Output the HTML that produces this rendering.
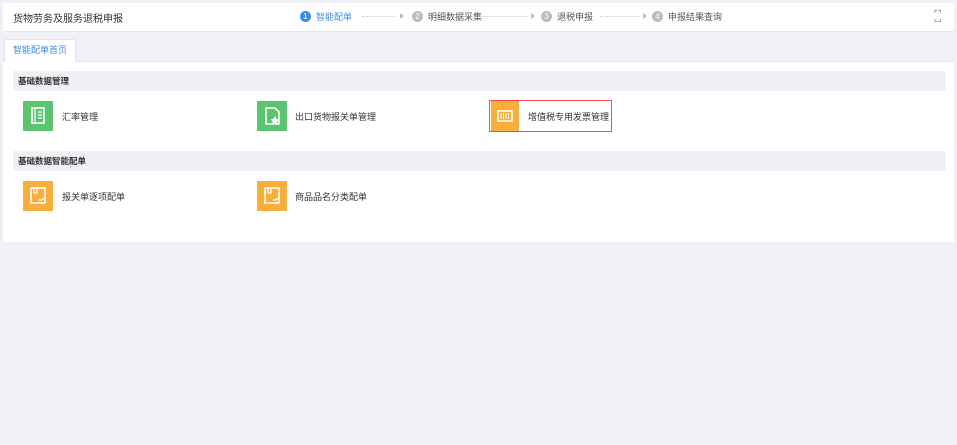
<!DOCTYPE html>
<html><head><meta charset="utf-8"><style>
*{margin:0;padding:0;box-sizing:border-box}
body{width:957px;height:445px;background:#f0f1f6;font-family:"Liberation Sans","Noto Sans CJK SC",sans-serif;font-size:9px;color:#333;position:relative;overflow:hidden}
.abs{position:absolute}
.hdr{left:3px;top:3px;width:951px;height:29px;background:#fff;border-bottom:1px solid #e6e8ee}
.title{left:13px;top:10px;font-size:10px;color:#333}
.step{top:10px;font-size:9px;color:#555;display:flex;align-items:center}
.num{width:11px;height:11px;border-radius:50%;background:#bbb;color:#fff;font-size:8px;text-align:center;line-height:11px;margin-right:5px}
.dots{top:16px;border-top:1px dotted #ccc;height:0}
.arr{top:13px;width:0;height:0;border-left:4px solid #bbb;border-top:3px solid transparent;border-bottom:3px solid transparent}
.tab{left:4px;top:39px;width:72px;height:23px;background:#fff;border:1px solid #e3e5ea;border-bottom:none;color:#3a8ee6;font-size:9px;text-align:center;line-height:21px}
.main{left:3px;top:61px;width:951px;height:181px;background:#fff;border-top:1px solid #e3e5ea}
.sec{left:13px;width:933px;height:20px;background:#eef0f5;font-weight:bold;font-size:8.5px;line-height:20px;padding-left:5px;color:#333}
.ic{width:30px;height:30px}
.lbl{font-size:9px;color:#333}
</style></head><body>
<div class="abs hdr"></div>
<div class="abs title">货物劳务及服务退税申报</div>
<div class="abs step" style="left:300px;color:#3a8ee6"><span class="num" style="background:#3a8ee6">1</span>智能配单</div>
<div class="abs dots" style="left:362px;width:34px"></div><div class="abs arr" style="left:400px"></div>
<div class="abs step" style="left:412px"><span class="num">2</span>明细数据采集</div>
<div class="abs dots" style="left:480px;width:48px"></div><div class="abs arr" style="left:531px"></div>
<div class="abs step" style="left:541px"><span class="num">3</span>退税申报</div>
<div class="abs dots" style="left:600px;width:40px"></div><div class="abs arr" style="left:643px"></div>
<div class="abs step" style="left:652px"><span class="num">4</span>申报结果查询</div>
<div class="abs" style="left:934px;top:11px;font-size:8px;color:#666;line-height:5px">⌜⌝<br>⌞⌟</div>
<div class="abs main"></div>
<div class="abs tab">智能配单首页</div>
<div class="abs sec" style="top:71px">基础数据管理</div>
<div class="abs sec" style="top:151px">基础数据智能配单</div>

<svg class="abs ic" style="left:23px;top:101px" viewBox="0 0 30 30"><rect width="30" height="30" fill="#5cc46e"/><rect x="9" y="7" width="12" height="15" fill="none" stroke="#fff" stroke-width="1.6"/><path d="M12 7v15M15 11h4M15 14h4M15 17h4" stroke="#fff" stroke-width="1.3"/></svg>
<div class="abs lbl" style="left:62px;top:110px">汇率管理</div>

<svg class="abs ic" style="left:257px;top:101px" viewBox="0 0 30 30"><rect width="30" height="30" fill="#5cc46e"/><path d="M9 7h9l4 4v12H9z" fill="none" stroke="#fff" stroke-width="1.6"/><path d="M18 15l1.5 3 3 .3-2.3 2 .7 3-2.9-1.6-2.9 1.6.7-3-2.3-2 3-.3z" fill="#fff"/></svg>
<div class="abs lbl" style="left:295px;top:110px">出口货物报关单管理</div>

<div class="abs" style="left:489px;top:100px;width:123px;height:32px;border:1.5px solid #ef4d4d"></div>
<svg class="abs ic" style="left:491px;top:101px;width:28px" viewBox="0 0 28 30"><rect width="28" height="30" fill="#f9ad3b"/><rect x="7" y="10" width="14" height="10" fill="none" stroke="#fff" stroke-width="1.5"/><path d="M10 12v6M12.5 12v6M15 12v6M17.5 12v6" stroke="#fff" stroke-width="1"/></svg>
<div class="abs lbl" style="left:528px;top:110px">增值税专用发票管理</div>

<svg class="abs ic" style="left:23px;top:181px" viewBox="0 0 30 30"><rect width="30" height="30" fill="#f9ad3b"/><path d="M8 7h14v15H8z" fill="none" stroke="#fff" stroke-width="1.6"/><path d="M11 7v5h3V7M16 19h3l2-2" stroke="#fff" stroke-width="1.3" fill="none"/></svg>
<div class="abs lbl" style="left:62px;top:190px">报关单逐项配单</div>

<svg class="abs ic" style="left:257px;top:181px" viewBox="0 0 30 30"><rect width="30" height="30" fill="#f9ad3b"/><path d="M8 7h14v15H8z" fill="none" stroke="#fff" stroke-width="1.6"/><path d="M11 7v5h3V7M16 19h3l2-2" stroke="#fff" stroke-width="1.3" fill="none"/></svg>
<div class="abs lbl" style="left:295px;top:190px">商品品名分类配单</div>
</body></html>
